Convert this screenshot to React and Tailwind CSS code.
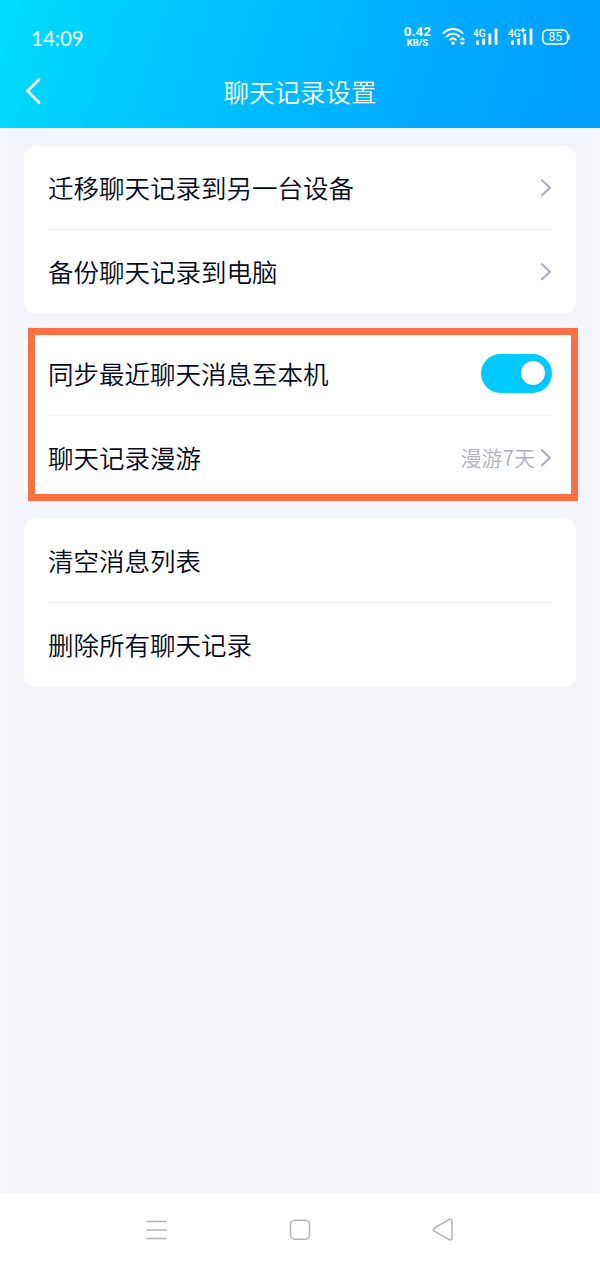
import React, { useState } from "react";

const Chevron = () => (
  <svg width="12" height="18" viewBox="0 0 12 18" fill="none">
    <path d="M2 1.2 L10 8.7 L2 16.2" stroke="#adaebd" strokeWidth="2.2" strokeLinecap="round" strokeLinejoin="round" />
  </svg>
);

const Row = ({ label, children }) => (
  <div className="flex h-[84px] items-center justify-between border-b border-[#f0f0f2] last:border-b-0">
    <span className="pb-[2px] text-[25.5px] leading-none font-[350] whitespace-nowrap text-[#03081a]">{label}</span>
    {children}
  </div>
);

const Card = ({ children }) => (
  <div className="h-[168px] rounded-xl bg-white px-6">{children}</div>
);

const Wifi = () => (
  <svg width="24" height="20" viewBox="0 0 24 20" fill="none" stroke="white" strokeWidth="2" strokeLinecap="round">
    <path d="M1.5 6 C7 0.5 15 0.5 20.5 6" />
    <path d="M4.7 9.5 C8.4 5.9 13.6 5.9 17.3 9.5" />
    <path d="M8 12.7 C9.9 11 12.1 11 14 12.7" />
    <circle cx="11" cy="16.2" r="1.8" fill="white" stroke="none" />
    <path d="M18.2 12.6 L20.3 10.3 L22.4 12.6 Z M18.2 15.6 L20.3 17.9 L22.4 15.6 Z" fill="white" strokeWidth="0.6" strokeLinejoin="round" />
  </svg>
);

const Signal = ({ plus }) => (
  <svg width="26" height="20" viewBox="0 0 26 20" fill="white">
    <text x="0" y="9.5" fontSize="11.5" fontWeight="500" fontFamily="Roboto, sans-serif" textLength="12.5" lengthAdjust="spacingAndGlyphs">
      4G
    </text>
    {plus && <path d="M12.6 3.2 H17.6 M15.1 0.7 V5.7" stroke="white" strokeWidth="1.5" />}
    <rect x="3.2" y="13.5" width="2.8" height="4.5" rx="0.8" />
    <rect x="9.3" y="11.5" width="2.8" height="6.5" rx="0.8" />
    <rect x="15.4" y="6.5" width="2.8" height="11.5" rx="0.8" />
    <rect x="21.6" y="1.5" width="2.8" height="16.5" rx="0.8" />
  </svg>
);

const Battery = () => (
  <svg width="28" height="16" viewBox="0 0 28 16" fill="none">
    <rect x="0.8" y="0.9" width="24.8" height="14.2" rx="4.5" stroke="white" strokeWidth="1.5" />
    <path d="M26.2 5 Q28 5.7 28 8 Q28 10.3 26.2 11 Z" fill="white" />
    <text x="13.2" y="12.2" fontSize="12" textAnchor="middle" fill="white" fontFamily="Roboto, sans-serif">
      85
    </text>
  </svg>
);

const StatusBar = () => (
  <div className="flex h-[56px] items-center justify-between pt-[18px] pr-[30px] pl-[31px] text-white">
    <span className="pt-[3px] font-[Lato,sans-serif] text-[20.5px] leading-none">14:09</span>
    <div className="flex items-center">
      <div className="mr-[11px] flex flex-col items-center font-[Roboto,sans-serif] leading-none font-bold">
        <span className="text-[13.5px] leading-[11px]">0.42</span>
        <span className="text-[9.5px] leading-[11px]">KB/S</span>
      </div>
      <Wifi />
      <div className="ml-[7px] flex gap-[9px]">
        <Signal />
        <Signal plus />
      </div>
      <div className="ml-[8px]">
        <Battery />
      </div>
    </div>
  </div>
);

const App = () => {
  const [sync, setSync] = useState(true);

  return (
    <div className="flex h-[1266px] w-[600px] flex-col bg-[#f4f5fa] font-['Noto_Sans_CJK_SC',sans-serif]">
      <header className="h-32 bg-linear-[108deg,#00dcff_0%,#00c2ff_35%,#00a8ff_75%,#009dff_100%]">
        <StatusBar />
        <div className="grid h-[70px] grid-cols-[72px_1fr_72px] items-center text-white">
          <button className="pl-[25px]">
            <svg width="17" height="28" viewBox="0 0 17 28" fill="none">
              <path d="M14 2.5 L2.5 14 L14 25.5" stroke="white" strokeWidth="2.8" strokeLinecap="round" strokeLinejoin="round" />
            </svg>
          </button>
          <h1 className="text-center text-[25.5px] leading-none font-[350]">聊天记录设置</h1>
        </div>
      </header>

      <main className="flex flex-1 flex-col gap-[18px] border-x-2 border-[#f7f8fc] px-[22px] pt-[18px]">
        <Card>
          <Row label="迁移聊天记录到另一台设备">
            <Chevron />
          </Row>
          <Row label="备份聊天记录到电脑">
            <Chevron />
          </Row>
        </Card>

        <div className="relative">
          <Card>
            <Row label="同步最近聊天消息至本机">
              <button
                role="switch"
                aria-checked={sync}
                onClick={() => setSync(!sync)}
                className={`mb-px flex h-[39px] w-[71px] items-center rounded-full px-[7px] ${sync ? "justify-end bg-[#00caff]" : "justify-start bg-gray-300"}`}
              >
                <span className="size-6 rounded-full bg-white shadow-sm" />
              </button>
            </Row>
            <Row label="聊天记录漫游">
              <div className="flex items-center gap-[5px]">
                <span className="pb-px text-[21px] leading-none font-[350] text-[#b0b1c0]">漫游7天</span>
                <Chevron />
              </div>
            </Row>
          </Card>
          <div className="pointer-events-none absolute -top-1 left-1 h-[173px] w-[550px] border-7 border-[#fb7042]" />
        </div>

        <div className="pt-px">
          <Card>
            <Row label="清空消息列表" />
            <Row label="删除所有聊天记录" />
          </Card>
        </div>
      </main>

      <nav className="flex h-[73px] items-center justify-between bg-white px-[146px]">
        <svg width="22" height="22" viewBox="0 0 22 22" stroke="#b3b3b3" strokeWidth="1.6">
          <path d="M0.5 2.5 H20.8 M0.5 11 H20.8 M0.5 19.5 H20.8" />
        </svg>
        <svg width="22" height="22" viewBox="0 0 22 22" fill="none" stroke="#b3b3b3" strokeWidth="1.5">
          <rect x="1.5" y="1.2" width="19" height="19" rx="4" />
        </svg>
        <svg width="22" height="24" viewBox="0 0 22 24" fill="none" stroke="#b3b3b3" strokeWidth="1.5" strokeLinejoin="round">
          <path d="M17.2 1.5 L2.2 10.1 Q0.4 11.7 2.2 13 L17.2 21.7 Q19.8 22.5 20 20 V3.2 Q19.8 0.5 17.2 1.5 Z" />
        </svg>
      </nav>
    </div>
  );
};

export default App;
